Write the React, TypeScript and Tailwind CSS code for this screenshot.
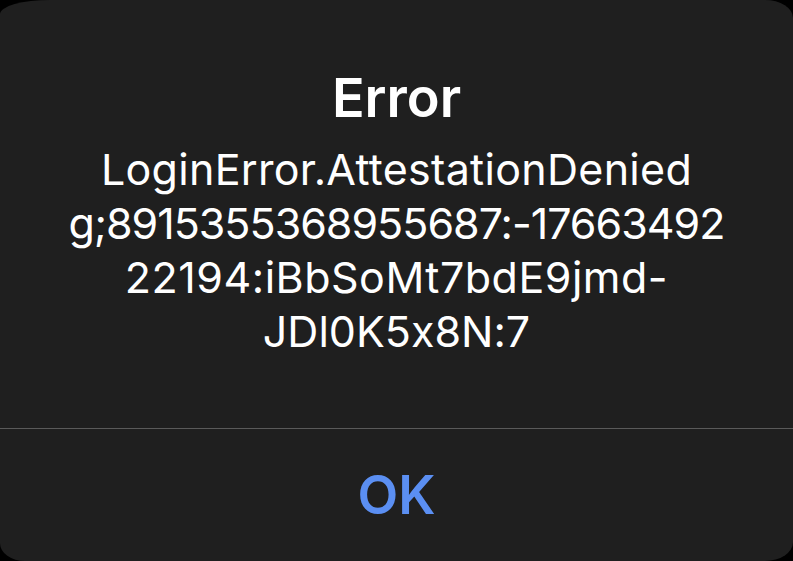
export default function App() {
  const lines = [
    { text: 'LoginError.AttestationDenied', cls: 'tracking-[0.3px]' },
    { text: 'g;8915355368955687:-17663492', cls: 'tracking-[-1px]' },
    { text: '22194:iBbSoMt7bdE9jmd-', cls: 'tracking-[0.5px]' },
    { text: 'JDl0K5x8N:7', cls: 'tracking-normal' },
  ]

  return (
    <div className="w-[793px] h-[561px] bg-black overflow-hidden font-['Inter','Liberation_Sans',sans-serif] [font-feature-settings:'calt'_0]">
      <div className="w-full h-full flex flex-col bg-[#1f1f1f] rounded-tl-[50px_14px] rounded-tr-[28px_18px] rounded-bl-[25px_18px] rounded-br-[28px_19px]">
        {/* Title + message */}
        <div className="flex flex-col items-center pt-[66px] h-[428px] text-white">
          <h1 className="text-[54px] leading-[64px] font-semibold">Error</h1>
          <div className="mt-[12px] flex flex-col items-center text-[43px] leading-[54px]">
            {lines.map((line) => (
              <p key={line.text} className={line.cls}>
                {line.text}
              </p>
            ))}
          </div>
        </div>

        {/* Divider */}
        <div className="h-px bg-[#5a5a5a]" />

        {/* Action */}
        <div className="flex-1 flex items-center justify-center">
          <span className="text-[53px] leading-none font-semibold text-[#5b8ff2]">OK</span>
        </div>
      </div>
    </div>
  )
}
